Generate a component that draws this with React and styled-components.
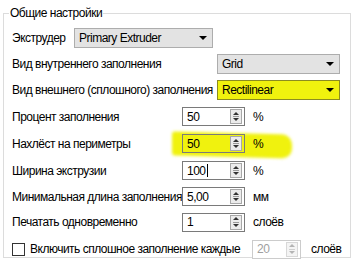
import React from "react";
import styled, { createGlobalStyle } from "styled-components";

const Global = createGlobalStyle`
    html, body {
        margin: 0;
        padding: 0;
        background: #ffffff;
    }
    body {
        width: 356px;
        height: 271px;
        overflow: hidden;
        font-family: "Liberation Sans", Arial, sans-serif;
        font-size: 12px;
        letter-spacing: -0.5px;
        color: #000;
    }
`;

const HL = "#f0f20e";

const Group = styled.fieldset`
    margin: 5px 0 0 3px;
    width: 348px;
    height: 253px;
    box-sizing: border-box;
    border: 1px solid #dcdcdc;
    padding: 4px 8px 0 8px;
`;

const Legend = styled.legend`
    margin-left: -3px;
    padding: 0 1px;
    line-height: 16px;
`;

const Rows = styled.div`
    display: flex;
    flex-direction: column;
`;

const Row = styled.div`
    display: grid;
    grid-template-columns: ${p => p.$cols};
    align-items: center;
    height: ${p => p.$h || 26}px;
`;

const Label = styled.span`
    white-space: nowrap;
`;

const Combo = styled.div`
    position: relative;
    display: flex;
    align-items: center;
    justify-content: space-between;
    box-sizing: border-box;
    width: ${p => p.$w}px;
    height: 20px;
    padding: 0 5px 0 4px;
    background: ${p => (p.$mark ? HL : "#e3e3e3")};
    border: 1px solid ${p => (p.$mark ? "#8c8c20" : "#adadad")};

    ${p => p.$mark && `
        &::before {
            content: "";
            position: absolute;
            left: -6px;
            right: -7px;
            top: -5px;
            bottom: -4px;
            background: ${HL};
            border-radius: 4px;
            filter: blur(1.5px);
            z-index: -1;
        }
    `}
`;

const Arrow = styled.span`
    width: 0;
    height: 0;
    border-left: 4px solid transparent;
    border-right: 4px solid transparent;
    border-top: 4px solid #000;
`;

const Field = styled.div`
    position: relative;
    display: flex;
    align-items: center;
    gap: ${p => p.$gap || 8}px;
    z-index: 0;

    ${p => p.$mark && `
        &::before {
            content: "";
            position: absolute;
            left: -10px;
            width: 120px;
            top: -1px;
            bottom: -4px;
            background: ${HL};
            border-radius: 3px 10px 10px 3px;
            transform: skewY(1.5deg);
            filter: blur(1.5px);
            z-index: -1;
        }
    `}
`;

const Spin = styled.div`
    display: flex;
    align-items: center;
    justify-content: space-between;
    box-sizing: border-box;
    width: ${p => p.$w || 63}px;
    height: 19px;
    padding: 0 2px 0 4px;
    background: ${p => (p.$mark ? HL : "#fff")};
    border: 1px solid ${p => (p.$off ? "#cccccc" : "#7a7a7a")};
    color: ${p => (p.$off ? "#a0a0a0" : "#000")};
`;

const Value = styled.span`
    display: flex;
    align-items: center;
`;

const Caret = styled.span`
    display: inline-block;
    width: 1px;
    height: 13px;
    margin-left: 1px;
    background: #000;
`;

const Buttons = styled.div`
    display: flex;
    flex-direction: column;
    align-items: center;
    justify-content: space-around;
    box-sizing: border-box;
    width: 12px;
    height: 15px;
    border: 1px solid ${p => (p.$off ? "#d8d8d8" : "#a8a8a8")};
    background: ${p => (p.$off ? "#f4f4f4" : "#ececec")};
    position: relative;

    &::after {
        content: "";
        position: absolute;
        left: 2px;
        right: 2px;
        top: 6px;
        height: 1px;
        background: ${p => (p.$off ? "#d0d0d0" : "#9a9a9a")};
    }
`;

const Tri = styled.span`
    width: 0;
    height: 0;
    border-left: 3px solid transparent;
    border-right: 3px solid transparent;
    ${p => (p.$down ? "border-top" : "border-bottom")}: 3px solid ${p => (p.$off ? "#b4b4b4" : "#333")};
`;

const Unit = styled.span`
    white-space: nowrap;
`;

const Box = styled.span`
    width: 13px;
    height: 13px;
    box-sizing: border-box;
    border: 1px solid #333;
    background: #fff;
`;

function SpinBox({ value, caret, mark, off, w }) {
    return (
        <Spin $mark={mark} $off={off} $w={w}>
            <Value>{value}{caret ? <Caret /> : null}</Value>
            <Buttons $off={off}>
                <Tri $off={off} />
                <Tri $down $off={off} />
            </Buttons>
        </Spin>
    );
}

const spinRows = [
    { label: "Процент заполнения", value: "50", unit: "%", h: 27 },
    { label: "Нахлёст на периметры", value: "50", unit: "%", mark: true, h: 27 },
    { label: "Ширина экструзии", value: "100", unit: "%", caret: true, h: 27 },
    { label: "Минимальная длина заполнения", value: "5,00", unit: "мм", h: 25 },
    { label: "Печатать одновременно", value: "1", unit: "слоёв", h: 26 },
];

export default function App() {
    return (
        <>
            <Global />
            <Group>
                <Legend>Общие настройки</Legend>
                <Rows>
                    <Row $cols="62px auto">
                        <Label>Экструдер</Label>
                        <Combo $w={139}>Primary Extruder<Arrow /></Combo>
                    </Row>
                    <Row $cols="205px auto">
                        <Label>Вид внутреннего заполнения</Label>
                        <Combo $w={123}>Grid<Arrow /></Combo>
                    </Row>
                    <Row $cols="205px auto">
                        <Label>Вид внешнего (сплошного) заполнения</Label>
                        <Combo $w={123} $mark>Rectilinear<Arrow /></Combo>
                    </Row>
                    {spinRows.map(r => (
                        <Row key={r.label} $cols="170px auto" $h={r.h}>
                            <Label>{r.label}</Label>
                            <Field $mark={r.mark}>
                                <SpinBox value={r.value} caret={r.caret} mark={r.mark} />
                                <Unit>{r.unit}</Unit>
                            </Field>
                        </Row>
                    ))}
                    <Row $cols="18px 222px auto" $h={28}>
                        <Box />
                        <Label>Включить сплошное заполнение каждые</Label>
                        <Field $gap={10}>
                            <SpinBox value="20" off w={49} />
                            <Unit>слоёв</Unit>
                        </Field>
                    </Row>
                </Rows>
            </Group>
        </>
    );
}
